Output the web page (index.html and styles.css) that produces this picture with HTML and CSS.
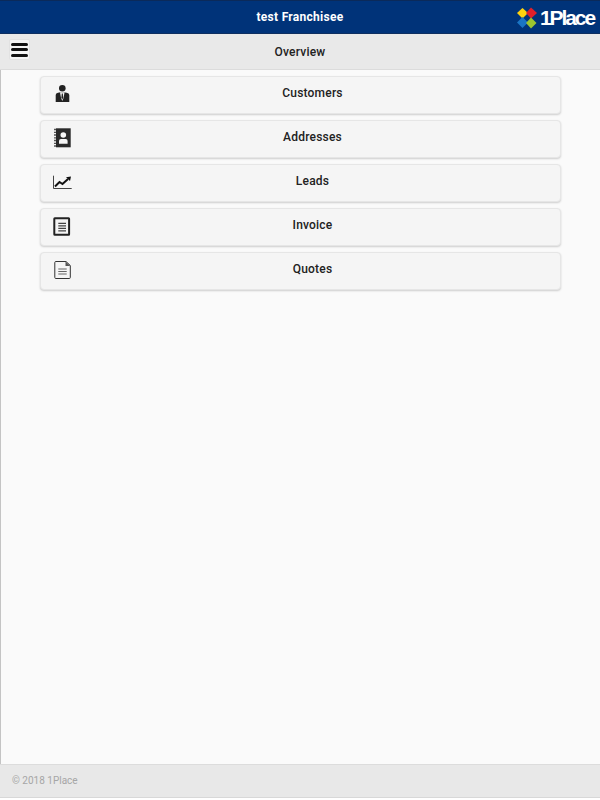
FILE: index.html
```html
<!DOCTYPE html>
<html lang="en">
<head>
<meta charset="utf-8">
<title>Overview</title>
<link rel="stylesheet" href="styles.css">
</head>
<body>
<div class="page">
  <header class="topbar">
    <span class="topbar-title">test Franchisee</span>
    <div class="logo">
      <svg class="logo-mark" width="22" height="22" viewBox="0 0 22 22">
        <polygon points="6.500,1 12,6 6.500,11.500 1,6" fill="#fdd20e"/>
        <polygon points="15,0.500 21,6 15,11.500 10,6" fill="#e0202a"/>
        <polygon points="6.500,10 12,15.500 6.500,21 1,15.500" fill="#1a75c4"/>
        <polygon points="15,10.500 20.500,16 15,21.500 10,16" fill="#9cc52f"/>
      </svg>
      <span class="logo-text">1Place</span>
    </div>
  </header>
  <div class="subbar">
    <button class="menu-btn" aria-label="Menu">
      <span class="menu-line"></span><span class="menu-line"></span><span class="menu-line"></span>
    </button>
    <span class="subbar-title">Overview</span>
  </div>
  <main class="content">
    <div class="card">
      <svg class="card-icon" width="24" height="24" viewBox="0 0 24 24">
        <circle cx="12.300" cy="6.300" r="3.300" fill="#222"/>
        <path d="M5.700 20V13Q5.700 11 8 10.700L10.500 10.300H14L16.600 10.700Q19.300 11 19.300 13V20Z" fill="#222"/>
        <path d="M10 10.300H14.600L13.500 16 12.300 19 11.100 16Z" fill="#f5f5f5"/>
        <path d="M11.800 11.500H12.800L13.200 15.500 12.300 17.500 11.400 15.500Z" fill="#222"/>
      </svg>
      <span class="card-label">Customers</span>
    </div>
    <div class="card">
      <svg class="card-icon" width="24" height="24" viewBox="0 0 24 24">
        <rect x="6" y="2.300" width="14.700" height="19" fill="#2a2a2a"/>
        <path d="M4 3.500H6M4 6.300H6M4 9H6M4 11.800H6M4 14.500H6M4 17.300H6M4 20H6" stroke="#555" stroke-width="1.300" fill="none"/>
        <circle cx="13.300" cy="9" r="2.800" fill="#f5f5f5"/>
        <path d="M9 17.800V15Q9 13 11 13H15.600Q17.600 13 17.600 15V17.800Z" fill="#f5f5f5"/>
      </svg>
      <span class="card-label">Addresses</span>
    </div>
    <div class="card">
      <svg class="card-icon" width="24" height="24" viewBox="0 0 24 24">
        <path d="M3.500 5.700V18.500H21.700" stroke="#444" stroke-width="1" fill="none"/>
        <path d="M5 16.500L9.500 12 12.500 14 18 9" stroke="#111" stroke-width="2" fill="none"/>
        <polygon points="16,7.300 21,6.500 20,11" fill="#111"/>
      </svg>
      <span class="card-label">Leads</span>
    </div>
    <div class="card">
      <svg class="card-icon" width="24" height="24" viewBox="0 0 24 24">
        <rect x="4.300" y="4.300" width="14.800" height="16.400" rx="0.500" fill="none" stroke="#222" stroke-width="2"/>
        <path d="M8.300 9.300H16M8.300 11.800H16M8.300 14.300H16M8.300 16.800H16" stroke="#444" stroke-width="1.200" fill="none"/>
      </svg>
      <span class="card-label">Invoice</span>
    </div>
    <div class="card">
      <svg class="card-icon" width="24" height="24" viewBox="0 0 24 24">
        <path d="M4.800 4.500Q4.800 3.500 5.800 3.500H16L20.300 7.500V19.500Q20.300 20.500 19.300 20.500H5.800Q4.800 20.500 4.800 19.500Z" fill="none" stroke="#333" stroke-width="1"/>
        <polygon points="15.500,3.500 20.300,8 15.500,8" fill="#555"/>
        <path d="M8.300 11H16.700M8.300 13.500H16.700M8.300 16H16.700" stroke="#666" stroke-width="1.200" fill="none"/>
      </svg>
      <span class="card-label">Quotes</span>
    </div>
  </main>
  <footer class="footer">© 2018 1Place</footer>
</div>
</body>
</html>
```
FILE: styles.css
```css
* { box-sizing: border-box; }
html, body { margin: 0; padding: 0; height: 100%; background: #fff; }
.page {
  width: 600px;
  height: 798px;
  display: flex;
  flex-direction: column;
  font-family: Roboto, "Liberation Sans", sans-serif;
}
.topbar {
  position: relative;
  height: 34px;
  flex: none;
  background: #003379;
  border-top: 1px solid #0b2a5a;
  border-bottom: 1px solid #0e2f60;
  display: flex;
  align-items: center;
  justify-content: center;
}
.topbar-title {
  color: #fff;
  font-size: 12px;
  font-weight: 700;
  letter-spacing: .28px;
}
.logo {
  position: absolute;
  right: 6px;
  top: 6px;
  display: flex;
  align-items: center;
  gap: 2px;
}
.logo-text {
  color: #fff;
  font-family: "Liberation Sans", sans-serif;
  font-size: 21px;
  font-weight: 700;
  letter-spacing: -2.100px;
  line-height: 22px;
}
.subbar {
  position: relative;
  height: 36px;
  flex: none;
  background: #e9e9e9;
  border-bottom: 1px solid #dcdcdc;
  display: flex;
  align-items: center;
  justify-content: center;
}
.subbar-title {
  color: #222;
  font-size: 12px;
  font-weight: 500;
  letter-spacing: .2px;
}
.menu-btn {
  position: absolute;
  left: 9px;
  top: 5px;
  width: 21px;
  height: 21px;
  padding: 0;
  border: 1px solid #e2e2e2;
  background: #f3f3f3;
  border-radius: 2px;
  display: flex;
  flex-direction: column;
  align-items: center;
  justify-content: center;
  gap: 2.500px;
}
.menu-line {
  width: 17px;
  height: 3px;
  background: #111;
  border-radius: 2px;
}
.content {
  flex: 1;
  background: #fafafa;
  border-left: 1px solid #c4c4c4;
  padding: 6px 39px 0;
  display: flex;
  flex-direction: column;
  gap: 6px;
}
.card {
  position: relative;
  height: 38px;
  padding-left: 24px;
  background: #f5f5f5;
  border: 1px solid #e6e6e6;
  border-radius: 4px;
  box-shadow: 0 1px 2px rgba(0,0,0,.18);
  display: flex;
  justify-content: center;
}
.card-icon {
  position: absolute;
  left: 9px;
  top: 5px;
}
.card-label {
  color: #222;
  font-size: 12px;
  font-weight: 500;
  line-height: 31px;
  letter-spacing: .2px;
  padding-top: 1px;
}
.footer {
  height: 34px;
  flex: none;
  background: #e8e8e8;
  border-top: 1px solid #dcdcdc;
  border-bottom: 1px solid #d8d8d8;
  color: #a6a6a6;
  font-size: 10px;
  line-height: 31px;
  padding-left: 12px;
}
```
